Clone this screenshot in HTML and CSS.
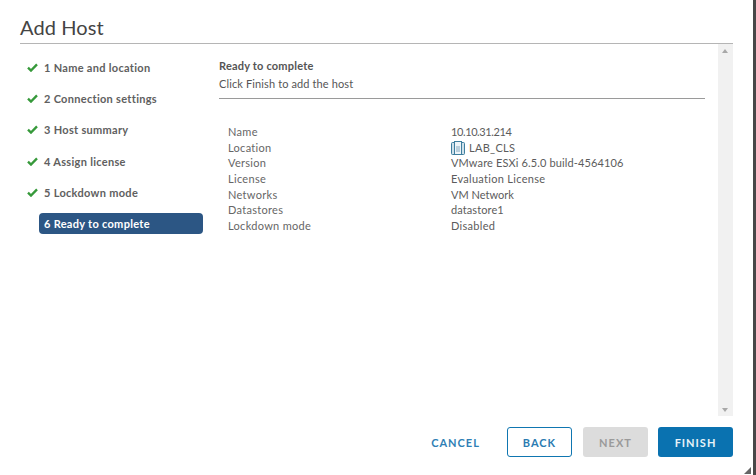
FILE: index.html
```html
<!DOCTYPE html>
<html lang="en">
<head>
<meta charset="utf-8">
<title>Add Host</title>
<link rel="stylesheet" href="styles.css">
</head>
<body>
<div class="dialog">
  <h1 class="title">Add Host</h1>
  <div class="body">
    <nav class="steps">
      <div class="step"><svg class="check" viewBox="0 0 12 10"><path d="M1 5.2 4.3 8.4 11 1.5"/></svg><span>1 Name and location</span></div>
      <div class="step"><svg class="check" viewBox="0 0 12 10"><path d="M1 5.2 4.3 8.4 11 1.5"/></svg><span>2 Connection settings</span></div>
      <div class="step"><svg class="check" viewBox="0 0 12 10"><path d="M1 5.2 4.3 8.4 11 1.5"/></svg><span>3 Host summary</span></div>
      <div class="step"><svg class="check" viewBox="0 0 12 10"><path d="M1 5.2 4.3 8.4 11 1.5"/></svg><span>4 Assign license</span></div>
      <div class="step"><svg class="check" viewBox="0 0 12 10"><path d="M1 5.2 4.3 8.4 11 1.5"/></svg><span>5 Lockdown mode</span></div>
      <div class="step current"><span>6 Ready to complete</span></div>
    </nav>
    <main class="content">
      <div class="pane">
        <header class="head">
          <div class="head-title">Ready to complete</div>
          <div class="head-sub">Click Finish to add the host</div>
        </header>
        <dl class="details">
          <dt>Name</dt><dd class="num">10.10.31.214</dd>
          <dt>Location</dt><dd class="loc"><svg class="dc" viewBox="0 0 14 14"><rect class="dc-back" x="0.5" y="1.5" width="13" height="12" rx="1"/><rect class="dc-front" x="3.5" y="0.5" width="7" height="13"/><rect class="dc-page" x="5" y="5" width="4" height="6"/></svg>LAB_CLS</dd>
          <dt>Version</dt><dd class="ver">VMware ESXi 6.5.0 build-4564106</dd>
          <dt>License</dt><dd>Evaluation License</dd>
          <dt>Networks</dt><dd class="net">VM Network</dd>
          <dt>Datastores</dt><dd class="ds">datastore1</dd>
          <dt>Lockdown mode</dt><dd>Disabled</dd>
        </dl>
      </div>
      <div class="scrollbar"><span class="arrow up"></span><span class="arrow down"></span></div>
    </main>
  </div>
  <footer class="actions">
    <button class="btn link">CANCEL</button>
    <button class="btn outline">BACK</button>
    <button class="btn disabled">NEXT</button>
    <button class="btn primary">FINISH</button>
  </footer>
  <span class="grip"></span>
</div>
</body>
</html>
```
FILE: styles.css
```css
* { box-sizing: border-box; }
html, body { margin: 0; height: 100%; }
body { background: #fff; font-family: "Lato", "Open Sans", sans-serif; color: #565656; overflow: hidden; }
.dialog { position: relative; width: 756px; height: 475px; padding: 0 20px; border-right: 3px solid #484848; display: flex; flex-direction: column; background: #fff; }
.title { margin: 0; height: 44px; padding-top: 14px; font-size: 20px; line-height: 26px; font-weight: 400; letter-spacing: .1px; color: #444; border-bottom: 1px solid #b5b5b5; }
.body { display: flex; height: 372px; }
.steps { width: 199px; flex: none; padding-top: 12px; display: flex; flex-direction: column; gap: 8px; }
.step { height: 23.2px; display: flex; align-items: center; font-size: 11px; font-weight: 700; letter-spacing: .3px; color: #606060; margin-left: 7px; margin-right: 16px; }
.check { width: 11px; height: 9px; margin-right: 6px; flex: none; }
.check path { fill: none; stroke: #36993a; stroke-width: 2.6; }
.step.current { background: #2c5684; color: #fff; margin-left: 19px; padding-left: 5px; border-radius: 4px; height: 21px; margin-top: 1px; }
.content { flex: 1; display: flex; min-width: 0; }
.pane { flex: 1; }
.head { padding-top: 15px; height: 55px; margin-right: 13px; border-bottom: 1px solid #9a9a9a; font-size: 11px; letter-spacing: .12px; }
.head-title { font-weight: 700; line-height: 14px; color: #555; letter-spacing: .2px; }
.head-sub { line-height: 14px; margin-top: 4px; }
.details { margin: 25.2px 0 0 9px; display: grid; grid-template-columns: 223px 1fr; grid-auto-rows: 15.6px; font-size: 11px; line-height: 15.6px; color: #666; letter-spacing: .3px; }
.details dd { margin: 0; color: #5c5c5c; }
.details .num { letter-spacing: -.4px; }
.details .ver { letter-spacing: .13px; }
.details .ds { letter-spacing: .1px; }
.details .net { letter-spacing: 0; }
.loc { display: flex; align-items: center; }
.dc { width: 14px; height: 14px; margin-right: 4px; }
.dc-back { fill: #cfe0ea; stroke: #3f7f9e; stroke-width: 1; }
.dc-front { fill: #eef4f8; stroke: #3f7f9e; stroke-width: 1; }
.dc-page { fill: #b9cfdc; }
.scrollbar { width: 15px; flex: none; background: #f1f1f1; position: relative; }
.arrow { position: absolute; left: 4px; width: 0; height: 0; border-left: 3px solid transparent; border-right: 3px solid transparent; }
.arrow.up { top: 5px; border-bottom: 4px solid #a8a8a8; }
.arrow.down { bottom: 4px; border-top: 4px solid #a8a8a8; }
.actions { display: flex; justify-content: flex-end; margin-top: 11px; gap: 10px; }
.btn { height: 30px; border-radius: 3px; border: 1px solid transparent; font-family: inherit; font-size: 11px; font-weight: 700; letter-spacing: 1px; padding: 0; }
.link { width: 83px; background: none; color: #2f7fb5; }
.outline { width: 65px; margin-right: 1px; background: #fff; border-color: #0f76b1; color: #2a7bb1; }
.disabled { width: 65px; background: #dcdcdc; color: #9a9a9a; }
.primary { width: 75px; background: #0a72b0; color: #e8f2f8; }
.grip { position: absolute; right: 2px; bottom: 1px; width: 0; height: 0; border-left: 7px solid transparent; border-bottom: 7px solid #666; }
```
